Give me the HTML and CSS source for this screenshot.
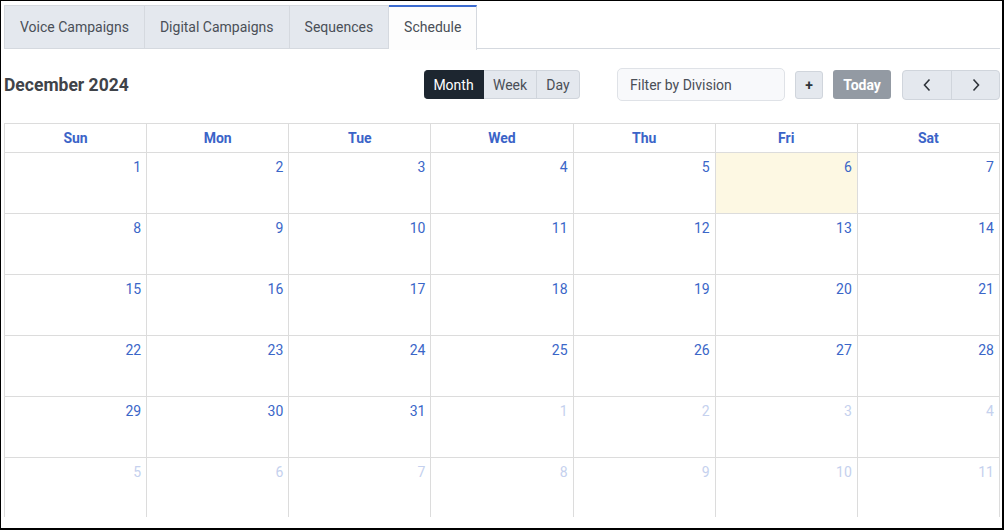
FILE: index.html
```html
<!DOCTYPE html>
<html lang="en">
<head>
  <meta charset="UTF-8">
  <meta name="viewport" content="width=device-width, initial-scale=1.0">
  <link rel="stylesheet" href="styles.css">
  <title>Schedule</title>
</head>
<body>
  <div class="frame">
    <div class="tabs">
      <div class="tab">Voice Campaigns</div>
      <div class="tab">Digital Campaigns</div>
      <div class="tab">Sequences</div>
      <div class="tab tab-active">Schedule</div>
    </div>

    <div class="toolbar">
      <div class="titulo">December 2024</div>
      <div class="views">
        <button class="view view-active">Month</button>
        <button class="view view-week">Week</button>
        <button class="view view-day">Day</button>
      </div>
      <input class="filtro" type="text" placeholder="Filter by Division">
      <button class="btn-plus">+</button>
      <button class="btn-today">Today</button>
      <div class="nav">
        <button class="nav-btn">
          <svg width="10" height="14" viewBox="0 0 10 14"><path d="M7.5 1.5 L2.5 7 L7.5 12.5" fill="none" stroke="#2f343a" stroke-width="1.6"/></svg>
        </button>
        <button class="nav-btn">
          <svg width="10" height="14" viewBox="0 0 10 14"><path d="M2.5 1.5 L7.5 7 L2.5 12.5" fill="none" stroke="#2f343a" stroke-width="1.6"/></svg>
        </button>
      </div>
    </div>

    <div class="calendario">
      <div class="grade" id="grade">
        <div class="dia-nome">Sun</div>
        <div class="dia-nome">Mon</div>
        <div class="dia-nome">Tue</div>
        <div class="dia-nome">Wed</div>
        <div class="dia-nome">Thu</div>
        <div class="dia-nome">Fri</div>
        <div class="dia-nome">Sat</div>
      </div>
    </div>
  </div>

  <script>
    const grade = document.getElementById('grade');
    // dezembro 2024 comeca num domingo
    for (let i = 0; i < 42; i++) {
      const cel = document.createElement('div');
      cel.className = 'celula';
      let n = i + 1;
      if (n > 31) {
        n = n - 31;
        cel.classList.add('fora');
      }
      if (i === 5) cel.classList.add('hoje');
      cel.innerHTML = `<span class="numero">${n}</span>`;
      grade.appendChild(cel);
    }
  </script>
</body>
</html>
```

FILE: styles.css
```css
body {
  margin: 0;
  padding: 0;
  font-family: 'Roboto', 'Liberation Sans', sans-serif;
  background: #fff;
}

.frame {
  width: 1004px;
  height: 530px;
  box-sizing: border-box;
  border-style: solid;
  border-color: #000;
  border-width: 1px 2px 2px 1px;
  padding: 4px 2px 0 3px;
  overflow: hidden;
}

.tabs {
  display: flex;
  height: 44px;
  border-bottom: 1px solid #d5d9df;
  box-sizing: border-box;
}

.tab {
  display: flex;
  align-items: center;
  padding: 0 15px 1px;
  height: 44px;
  box-sizing: border-box;
  background-color: #e4e8ee;
  border: 1px solid #d5d9df;
  border-left: none;
  font-size: 14px;
  color: #4a4f57;
}

.tab:first-child {
  border-left: 1px solid #d5d9df;
}

.tab-active {
  background-color: #fdfdfd;
  border-top: 2px solid #3b6bd0;
  border-bottom: none;
  height: 45px;
  padding-bottom: 4px;
}

.toolbar {
  display: flex;
  align-items: center;
  padding: 19px 0 22px;
  height: 33px;
}

.titulo {
  flex: 1;
  font-size: 17.5px;
  font-weight: bold;
  color: #3f4349;
}

.views {
  display: flex;
  height: 29px;
  margin-right: 37px;
}

.view {
  font-family: inherit;
  font-size: 14px;
  color: #4a4f57;
  background-color: #e4e8ee;
  border: 1px solid #d0d5dc;
  border-left: none;
  padding: 0;
  cursor: pointer;
}

.view-active {
  background-color: #1d2630;
  border-color: #1d2630;
  color: #fff;
  border-radius: 4px 0 0 4px;
  width: 60px;
}

.view-week {
  width: 53px;
}

.view-day {
  width: 43px;
  border-radius: 0 4px 4px 0;
}

.filtro {
  width: 168px;
  height: 33px;
  box-sizing: border-box;
  border: 1px solid #dfe2e7;
  border-radius: 5px;
  background-color: #f8f9fb;
  padding: 0 12px;
  font-family: inherit;
  font-size: 14px;
  margin-right: 10px;
}

.filtro::placeholder {
  color: #4a4f57;
}

.btn-plus {
  width: 28px;
  height: 28px;
  border: 1px solid #d0d5dc;
  border-radius: 3px;
  background-color: #e4e8ee;
  color: #2f343a;
  font-family: inherit;
  font-weight: bold;
  font-size: 14px;
  padding: 0;
  margin-right: 10px;
}

.btn-today {
  width: 58px;
  height: 29px;
  border: none;
  border-radius: 3px;
  background-color: #939aa3;
  color: #fff;
  font-family: inherit;
  font-weight: bold;
  font-size: 14px;
  padding: 0;
  margin-right: 11px;
}

.nav {
  display: flex;
  height: 28px;
  border: 1px solid #d0d5dc;
  border-radius: 4px;
  background-color: #e4e8ee;
  overflow: hidden;
}

.nav-btn {
  width: 48px;
  border: none;
  background: none;
  padding: 0;
  display: flex;
  align-items: center;
  justify-content: center;
}

.nav-btn + .nav-btn {
  border-left: 1px solid #d0d5dc;
}

.calendario {
  height: 394px;
  overflow: hidden;
  width: 996px;
}

.grade {
  display: grid;
  grid-template-columns: repeat(7, 1fr);
  grid-auto-rows: 61px;
  grid-template-rows: 29px;
  border-top: 1px solid #dcdcdc;
  border-left: 1px solid #dcdcdc;
}

.dia-nome {
  display: flex;
  align-items: center;
  justify-content: center;
  border-right: 1px solid #dcdcdc;
  border-bottom: 1px solid #dcdcdc;
  font-size: 14px;
  font-weight: bold;
  color: #3b64c8;
}

.celula {
  border-right: 1px solid #dcdcdc;
  border-bottom: 1px solid #dcdcdc;
  text-align: right;
  padding: 6px 5px 0 0;
  font-size: 14px;
  color: #3a66c8;
}

.hoje {
  background-color: #fdf8e3;
}

.fora {
  color: #c5d1ee;
}
```
